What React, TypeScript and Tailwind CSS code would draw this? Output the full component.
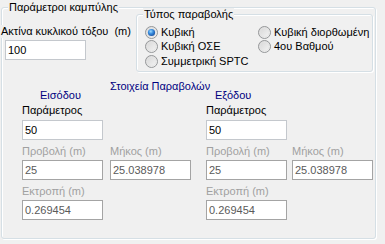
import React from "react";

function Radio({ checked }: { checked?: boolean }) {
  return (
    <svg width="13" height="13" viewBox="0 0 13 13" className="shrink-0">
      <defs>
        <linearGradient id="rgRing" x1="0" y1="0" x2="1" y2="1">
          <stop offset="0" stopColor="#d4d4d4" />
          <stop offset="1" stopColor="#f7f7f7" />
        </linearGradient>
        <radialGradient id="rgDot" cx="0.4" cy="0.35" r="0.7">
          <stop offset="0" stopColor="#9fdcff" />
          <stop offset="0.45" stopColor="#3a8ee0" />
          <stop offset="1" stopColor="#174f9e" />
        </radialGradient>
      </defs>
      <circle cx="6.5" cy="6.5" r="6" fill="url(#rgRing)" stroke="#959799" strokeWidth="1" />
      <circle cx="6.5" cy="6.5" r="4.5" fill="none" stroke="#e2e2e2" strokeWidth="0.8" />
      {checked && <circle cx="6.5" cy="6.5" r="3.6" fill="url(#rgDot)" />}
    </svg>
  );
}

function TextBox({ value, disabled }: { value: string; disabled?: boolean }) {
  return (
    <div
      className={
        disabled
          ? "h-[20px] w-[81px] flex items-center pl-[2px] bg-white border border-[#a4a4a4] text-[#5a5a5a] whitespace-nowrap"
          : "h-[20px] w-[81px] flex items-center pl-[2px] bg-white border border-[#c4c8cd] text-black whitespace-nowrap"
      }
    >
      {value}
    </div>
  );
}

function Panel({ right }: { right?: boolean }) {
  return (
    <div className={right ? "flex flex-col" : "flex flex-col w-[184px]"}>
      <div>Παράμετρος</div>
      <div className="mt-[3px]">
        <TextBox value="50" />
      </div>
      <div className="mt-[5px] flex text-[#a0a0a0] whitespace-nowrap">
        <div className={right ? "w-[86px]" : "w-[88px]"}>Προβολή (m)</div>
        <div>Μήκος (m)</div>
      </div>
      <div className={right ? "mt-[2px] flex gap-[5px]" : "mt-[2px] flex gap-[7px]"}>
        <TextBox value="25" disabled />
        <TextBox value="25.038978" disabled />
      </div>
      <div className="mt-[5px] text-[#a0a0a0]">Εκτροπή (m)</div>
      <div className="mt-[2px]">
        <TextBox value="0.269454" disabled />
      </div>
    </div>
  );
}

function RadioRow({ label, checked }: { label: string; checked?: boolean }) {
  return (
    <div className="h-[14.5px] flex items-center gap-[3px] whitespace-nowrap">
      <Radio checked={checked} />
      <span>{label}</span>
    </div>
  );
}

export default function App() {
  return (
    <div className="w-[385px] h-[244px] bg-[#f0f0f0] overflow-hidden text-[11px] leading-[13px] text-black font-['Liberation_Sans',Arial,sans-serif] pt-[7px]">
      <div className="relative ml-[1px] w-[375px] h-[232px] border border-[#d5dfe5] rounded-[3px] shadow-[inset_1px_1px_0_#fff,1px_1px_0_#fff]">
        <div className="absolute left-[6px] top-[-7px] px-[1px] bg-[#f0f0f0] whitespace-nowrap">
          Παράμετροι καμπύλης
        </div>

        <div className="flex items-start">
          <div className="w-[135px] ml-[-1px] mt-[17px] flex flex-col">
            <div className="self-start bg-[#f0f0f0] whitespace-pre">Ακτίνα κυκλικού τόξου  (m)</div>
            <div className="mt-[2px] ml-[4px]">
              <TextBox value="100" />
            </div>
          </div>

          <div className="relative mt-[6px] w-[237px] h-[58px] border border-[#d5dfe5] rounded-[3px] shadow-[inset_1px_1px_0_#fff,1px_1px_0_#fff]">
            <div className="absolute left-[6px] top-[-7px] px-[1px] bg-[#f0f0f0] whitespace-nowrap">
              Τύπος παραβολής
            </div>
            <div className="flex pt-[10px] pl-[8px]">
              <div className="w-[113px] flex flex-col">
                <RadioRow label="Κυβική" checked />
                <RadioRow label="Κυβική ΟΣΕ" />
                <RadioRow label="Συμμετρική SPTC" />
              </div>
              <div className="flex flex-col">
                <RadioRow label="Κυβική διορθωμένη" />
                <RadioRow label="4ου Βαθμού" />
              </div>
            </div>
          </div>
        </div>

        <div className="mt-[8px] ml-[38px] flex items-start text-[#000080] whitespace-nowrap">
          <div className="w-[70px] mt-[9px]">Εισόδου</div>
          <div className="w-[105px]">Στοιχεία Παραβολών</div>
          <div className="mt-[9px]">Εξόδου</div>
        </div>

        <div className="mt-[2px] ml-[20px] flex">
          <Panel />
          <Panel right />
        </div>
      </div>
    </div>
  );
}
